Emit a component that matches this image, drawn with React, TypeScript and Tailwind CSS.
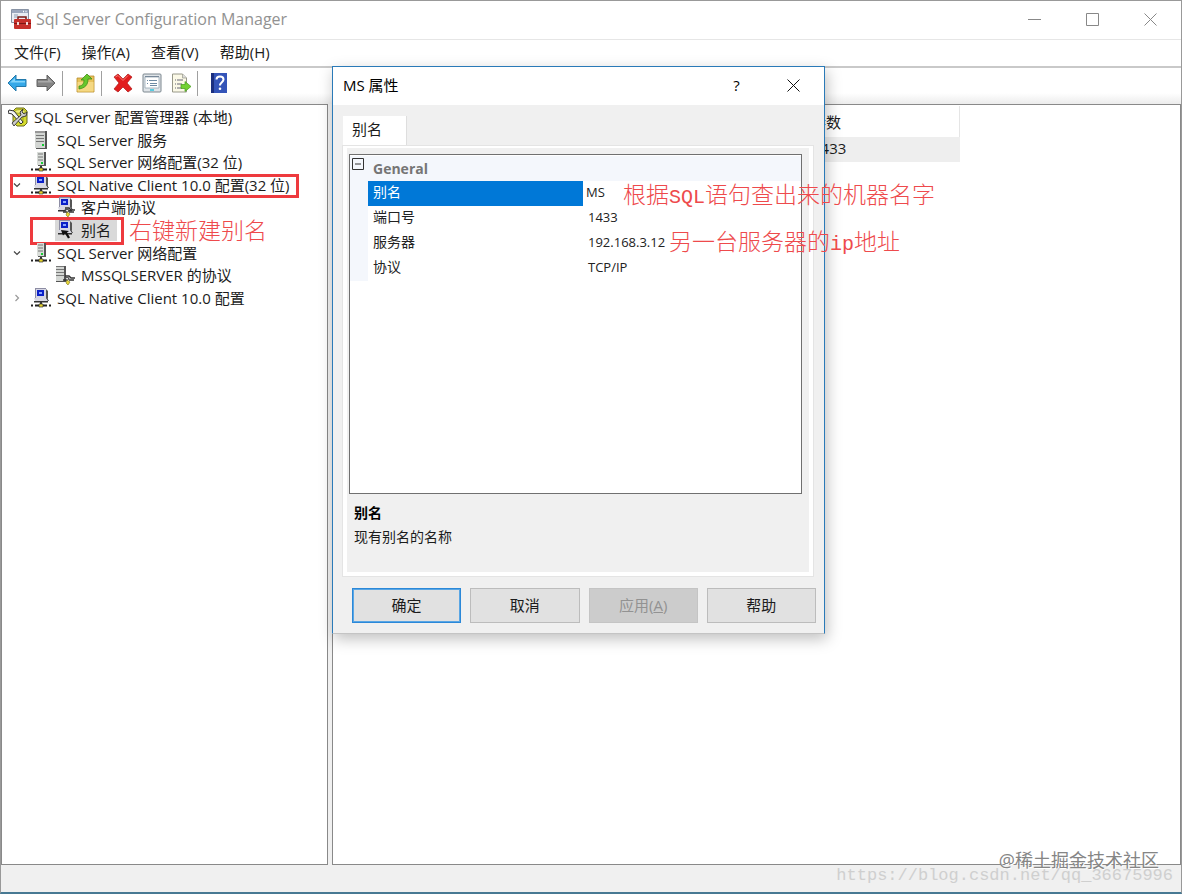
import type { ReactNode } from "react";

const uiFont = "font-['Open_Sans','Noto_Sans_CJK_SC',sans-serif]";

const menus = ["文件(F)", "操作(A)", "查看(V)", "帮助(H)"];

type IconName = "tools" | "server" | "network" | "client" | "protocols" | "alias" | "serverProtocols";

type TreeItem = {
    label: string;
    icon: IconName;
    level: number;
    state?: "open" | "closed";
    selected?: boolean;
    note?: string;
};

const tree: TreeItem[] = [
    { label: "SQL Server 配置管理器 (本地)", icon: "tools", level: 0 },
    { label: "SQL Server 服务", icon: "server", level: 1 },
    { label: "SQL Server 网络配置(32 位)", icon: "network", level: 1 },
    { label: "SQL Native Client 10.0 配置(32 位)", icon: "client", level: 1, state: "open" },
    { label: "客户端协议", icon: "protocols", level: 2 },
    { label: "别名", icon: "alias", level: 2, selected: true, note: "右键新建别名" },
    { label: "SQL Server 网络配置", icon: "network", level: 1, state: "open" },
    { label: "MSSQLSERVER 的协议", icon: "serverProtocols", level: 2 },
    { label: "SQL Native Client 10.0 配置", icon: "client", level: 1, state: "closed" },
];

const properties = [
    { name: "别名", value: "MS" },
    { name: "端口号", value: "1433" },
    { name: "服务器", value: "192.168.3.12" },
    { name: "协议", value: "TCP/IP" },
];

function Computer() {
    return (
        <>
            <path d="M5 1h10l2 2v8H5z" fill="#555" />
            <path d="M4 0h11v10H4z" fill="#d6d6e4" />
            <path d="M4 0h11v1H4zM4 0h1v10H4z" fill="#8d8da4" />
            <path d="M6 2h7v6H6z" fill="#0b20c8" />
            <path d="M8 4h3v2H8z" fill="#8aa5ff" />
            <path d="M3 10h13l2 3H4z" fill="#d8d8e2" />
            <path d="M3 13h14v1.500H3zM15 10l2 3h1l-2-3z" fill="#333" />
        </>
    );
}

function ServerBox() {
    return (
        <>
            <path d="M7 0h8v14H7z" fill="#555" />
            <path d="M6 0h7v13H6z" fill="#d9ddd9" />
            <path d="M7 2h5M7 5h5M7 8h5" stroke="#777" />
            <path d="M10 10h2v2h-2z" fill="#19cf35" />
        </>
    );
}

function Wire() {
    return (
        <>
            <path d="M9 14h2v3H9z" fill="#333" />
            <path d="M4 17.500h12M0 17.500h2M18 17.500h2" stroke="#222" strokeWidth="2" />
            <path d="M8 16h4v3H8z" fill="#e6d52d" stroke="#333" strokeWidth=".7" />
        </>
    );
}

function Plug() {
    return (
        <>
            <path d="M10 11h4l2 2h4M8 15h4l2-2M14 15h5" stroke="#333" strokeWidth="1.500" fill="none" />
            <path d="M10 12l4 1-2 3z" fill="#fff" stroke="#444" />
            <path d="M12 15l3 2-2 3-2-2z" fill="#e8d735" stroke="#77701d" strokeWidth=".6" />
        </>
    );
}

function TreeIcon({ name }: { name: IconName }) {
    return (
        <svg viewBox="0 0 20 20" className="size-5 shrink-0" aria-hidden="true">
            {name === "tools" && (
                <>
                    <path d="M8 1h8l3 3v12l-3 3H9l-4-4V4z" fill="#d6dc2c" stroke="#6b6d1e" />
                    <ellipse cx="12" cy="4.500" rx="5" ry="2" fill="#f1f277" stroke="#8c8d1f" strokeWidth=".7" />
                    <path d="M15 8v8M12 10v7" stroke="#9da321" />
                    <path d="M1 3l5 1 9 11-2 2L4 7 0 6z" fill="#f4f4f4" stroke="#333" />
                    <path d="M15 2l-3 3 1 3-9 8 2 3 8-9 4-1 1-4-3 2-2-2z" fill="#ccc" stroke="#333" strokeWidth=".9" />
                </>
            )}
            {name === "server" && (
                <>
                    <path d="M5 1h11v18H5z" fill="#555" />
                    <path d="M4 1h10v17H4z" fill="#d3d6d3" />
                    <path d="M4 1h10v2H4z" fill="#999" />
                    <path d="M5 5.500h8M5 8.500h8M5 11.500h8" stroke="#777" />
                    <path d="M11 14h2v2h-2z" fill="#12c931" />
                </>
            )}
            {name === "network" && (
                <>
                    <ServerBox />
                    <Wire />
                </>
            )}
            {name === "client" && (
                <>
                    <Computer />
                    <Wire />
                </>
            )}
            {name === "protocols" && (
                <>
                    <Computer />
                    <Plug />
                </>
            )}
            {name === "alias" && (
                <>
                    <Computer />
                    <path d="M6 10l8 1-2 1.500 3 5-2 1-3-5-2 2z" fill="#111" />
                </>
            )}
            {name === "serverProtocols" && (
                <>
                    <path d="M1 1h10v16H1z" fill="#555" />
                    <path d="M1 1h8v15H1z" fill="#d3d6d3" />
                    <path d="M1 4.500h8M1 7.500h8M1 10.500h8M1 1.500h8" stroke="#777" />
                    <Plug />
                </>
            )}
        </svg>
    );
}

function Tree() {
    return (
        <ul className="grid h-[203px] auto-rows-fr pl-1.5 text-[15px] leading-5" role="tree">
            {tree.map((item) => (
                <li key={item.label} role="treeitem" aria-selected={!!item.selected} className="relative flex items-center whitespace-nowrap">
                    {item.level > 0 && (
                        <span className={item.level === 1 ? "w-[23px] pl-1" : "w-[47px]"}>
                            {item.state && (
                                <button type="button" aria-label={item.label} className="block">
                                    <svg viewBox="0 0 10 10" className="size-2.5" fill="none">
                                        {item.state === "open" ? (
                                            <path d="M2 3.500l3 3 3-3" stroke="#444" strokeWidth="1.200" />
                                        ) : (
                                            <path d="M3.500 2l3 3-3 3" stroke="#999" strokeWidth="1.200" />
                                        )}
                                    </svg>
                                </button>
                            )}
                        </span>
                    )}
                    <span className={`flex h-full items-center gap-1.5 ${item.selected ? "bg-[#d9d9d9] pr-1.5" : ""}`}>
                        <TreeIcon name={item.icon} />
                        {item.label}
                    </span>
                    {item.level === 1 && item.icon === "client" && item.state === "open" && (
                        <span className="absolute top-0 -bottom-0.5 left-0.5 w-[289px] border-[3px] border-[#ee3a3e]" />
                    )}
                    {item.note && (
                        <>
                            <span className="absolute -top-0.5 -bottom-1 left-[22px] w-[94px] border-[3px] border-[#ee3a3e]" />
                            <Note className="-top-1.5 left-[121px]">{item.note}</Note>
                        </>
                    )}
                </li>
            ))}
        </ul>
    );
}

function Note({ className, children }: { className: string; children: ReactNode }) {
    return (
        <span className={`absolute z-20 font-['Noto_Sans_CJK_SC',sans-serif] text-[23px] font-light leading-8 whitespace-nowrap text-[#ee4a4c] ${className}`}>
            {children}
        </span>
    );
}

function Latin({ children }: { children: ReactNode }) {
    return <span className="font-['Liberation_Mono',monospace] text-[20px]">{children}</span>;
}

function ToolButton({ label, children }: { label: string; children: ReactNode }) {
    return (
        <button type="button" aria-label={label}>
            <svg viewBox="0 0 20 20" className="size-5">
                {children}
            </svg>
        </button>
    );
}

function Toolbar() {
    return (
        <div className="flex h-9 items-center bg-linear-to-b from-white from-70% to-[#ececec] pb-1.5 pl-1.5">
            <div className="flex gap-[9px] pr-1.5">
                <ToolButton label="后退">
                    <path d="M1 10l8-8v4.500h10v7H9V18z" fill="#35a8e8" stroke="#2379ab" />
                    <path d="M3 9.500L8 5v3h10v1.500z" fill="#85d5fa" />
                </ToolButton>
                <ToolButton label="前进">
                    <path d="M19 10l-8-8v4.500H1v7h10V18z" fill="#858585" stroke="#626262" />
                    <path d="M17 9.500L12 5v3H2v1.500z" fill="#a9a9a9" />
                </ToolButton>
            </div>
            <span className="h-[25px] w-px bg-[#a0a0a0]" />
            <div className="flex pr-1.5 pl-3">
                <ToolButton label="上一级">
                    <path d="M2 5h7l2-2h8v16H2z" fill="#e9c35b" stroke="#b58c2c" strokeWidth=".8" />
                    <path d="M2.500 9h16v9.500h-16z" fill="#f5d883" />
                    <path d="M4 13c3 0 5-2 5-6H6l6-6 5 5h-4c0 6-3 9-9 10z" fill="#67c72c" stroke="#3f8e18" strokeWidth=".8" />
                </ToolButton>
            </div>
            <span className="h-[25px] w-px bg-[#a0a0a0]" />
            <div className="flex gap-[9px] pr-1.5 pl-[11px]">
                <ToolButton label="删除">
                    <path d="M1 4l4-3 5 5 5-5 4 3-5 6 5 6-4 3-5-5-5 5-4-3 5-6z" fill="#e21d1d" stroke="#ad1717" strokeWidth=".7" />
                    <path d="M2.500 4L5 2.500l5 5 5-5" stroke="#f67a72" fill="none" />
                </ToolButton>
                <ToolButton label="属性">
                    <rect x="1" y="1" width="18" height="18" rx="1" fill="#dfe4e8" stroke="#7c878f" />
                    <path d="M3 4h14v11H3z" fill="#fff" stroke="#96a6b3" strokeWidth=".8" />
                    <path d="M3 3.500h14" stroke="#789" />
                    <path d="M7 7.500h8M8 10.500h7M8 12.500h7M5 7.500h1M5 10.500h1" stroke="#6d8ba3" />
                    <path d="M8 17h4" stroke="#2cc5df" strokeWidth="1.500" />
                </ToolButton>
                <ToolButton label="导出列表">
                    <path d="M1.500 1h10l4 4v14h-14z" fill="#fbf9e7" stroke="#989889" />
                    <path d="M11.500 1v4h4" fill="#ddd" stroke="#989889" strokeWidth=".7" />
                    <path d="M4 7h1M4 11h1M4 15h1M6 7h6M6 11h5M6 15h5" stroke="#667" strokeWidth="1.200" />
                    <path d="M10 11.500h4V8.500l6 5-6 5v-3h-4z" fill="#72d132" stroke="#439b1a" strokeWidth=".7" />
                </ToolButton>
            </div>
            <span className="h-[25px] w-px bg-[#a0a0a0]" />
            <div className="flex pl-[11px]">
                <ToolButton label="帮助">
                    <path d="M2 0h16v20H2z" fill="#3454b8" />
                    <path d="M2 0h3v20H2z" fill="#1b2f80" />
                    <path d="M7.500 6.500c0-4 7-4 7 0 0 2.500-3.500 3-3.500 6" stroke="#fff" strokeWidth="2" fill="none" />
                    <circle cx="11" cy="15.800" r="1.300" fill="#fff" />
                </ToolButton>
            </div>
        </div>
    );
}

function TitleBar() {
    return (
        <header className="flex h-[39px] items-center border-b border-[#e6e6e6] bg-white pb-0.5 pl-2.5 text-[#929292]">
            <svg viewBox="0 0 20 20" className="size-5" aria-hidden="true">
                <path d="M.5.500h17v13H.5z" fill="#e9edf3" stroke="#8893a5" />
                <path d="M1 1h16v3H1z" fill="#9ba7bd" />
                <path d="M12 2.500h1M14.500 2.500h1" stroke="#fff" strokeWidth="1.500" />
                <path d="M3 6h4M3 8h3" stroke="#8fa0b4" />
                <path d="M7 11V8h8v3" fill="none" stroke="#771915" strokeWidth="1.500" />
                <rect x="3" y="10" width="17" height="10" rx="1" fill="#c62f2a" />
                <path d="M3 14.500h17" stroke="#7b1613" />
                <path d="M6 13h2v3H6zM15 13h2v3h-2z" fill="#f0dada" />
            </svg>
            <h1 className="flex-1 pl-[5px] text-base">Sql Server Configuration Manager</h1>
            <div className="flex pr-0.5">
                <button type="button" aria-label="最小化" className="flex w-[58px] justify-center">
                    <svg viewBox="0 0 13 13" className="size-[13px]"><path d="M0 6.500h13" stroke="#888" /></svg>
                </button>
                <button type="button" aria-label="最大化" className="flex w-[58px] justify-center">
                    <svg viewBox="0 0 13 13" className="size-[13px]"><path d="M.5.500h12v12H.5z" stroke="#888" fill="none" /></svg>
                </button>
                <button type="button" aria-label="关闭" className="flex w-[58px] justify-center">
                    <svg viewBox="0 0 13 13" className="size-[13px]"><path d="M.5.500l12 12M12.500.500l-12 12" stroke="#888" /></svg>
                </button>
            </div>
        </header>
    );
}

function PropertyGrid() {
    return (
        <div className="relative h-[340px] border border-[#707070] bg-white pt-px">
            <table className="w-full table-fixed border-collapse text-left text-sm leading-5 text-[#222]">
                <colgroup>
                    <col className="w-[18px]" />
                    <col className="w-[215px]" />
                    <col />
                </colgroup>
                <tbody>
                    <tr className="h-[25px] bg-[#f4f7fc]">
                        <td className="p-0 align-top">
                            <button type="button" aria-label="General" className="block pt-0.5 pl-0.5">
                                <svg viewBox="0 0 12 12" className="size-3"><path d="M.5.500h11v11H.5zM3 6h6" fill="none" stroke="#333" /></svg>
                            </button>
                        </td>
                        <th colSpan={2} className="p-0 pl-[5px] font-bold text-[#757575]">General</th>
                    </tr>
                    {properties.map((row, i) => (
                        <tr key={row.name} className="h-[25px]">
                            <td className="bg-[#f4f7fc] p-0" />
                            <th className={`p-0 pb-[3px] pl-[5px] font-normal ${i === 0 ? "bg-[#0078d7] text-white" : ""}`}>{row.name}</th>
                            <td className={`p-0 pb-[3px] text-[13px] ${i === 0 ? "pl-[3px]" : "pl-[5px]"}`}>{row.value}</td>
                        </tr>
                    ))}
                </tbody>
            </table>
            <Note className="top-[22px] left-[273px]">根据<Latin>SQL</Latin>语句查出来的机器名字</Note>
            <Note className="top-[69px] left-[319px]">另一台服务器的<Latin>ip</Latin>地址</Note>
        </div>
    );
}

function PropertiesDialog() {
    const button = "h-[35px] flex-1 border pb-px text-[15px]";

    return (
        <section role="dialog" aria-label="MS 属性" className="absolute top-[65px] left-[331px] z-10 w-[493px] border border-[#2a7ab8] border-b-[#c4c4c4] bg-[#f0f0f0] shadow-[2px_5px_14px_rgba(0,0,0,0.25)]">
            <div className="flex h-[38px] items-center bg-white pb-0.5 pl-2.5">
                <h2 className="flex-1 text-[15px] text-black">MS 属性</h2>
                <button type="button" aria-label="帮助" className="w-[57px] text-[15px] text-black">?</button>
                <button type="button" aria-label="关闭" className="flex w-[59px] justify-center pr-[3px]">
                    <svg viewBox="0 0 13 13" className="size-[13px]"><path d="M.5.500l12 12M12.500.500l-12 12" stroke="#111" /></svg>
                </button>
            </div>
            <div className="pt-[11px] pr-[11px] pl-2.5">
                <div role="tablist" className="flex">
                    <button type="button" role="tab" aria-selected="true" className="h-[30px] w-16 border-r border-[#dedede] bg-white pb-1 pl-[9px] text-left text-[15px]">别名</button>
                </div>
                <div role="tabpanel" className="border-4 border-t-2 border-white bg-[#f0f0f0] outline outline-[#e4e4e4]">
                    <div className="pt-1.5 pr-[7px] pl-0.5">
                        <PropertyGrid />
                    </div>
                    <div className="h-[78px] pt-[7px] pl-[7px] text-sm leading-6">
                        <h3 className="font-bold text-black">别名</h3>
                        <p>现有别名的名称</p>
                    </div>
                </div>
            </div>
            <div className="flex gap-[9px] pt-3 pr-2 pb-2.5 pl-[19px]">
                <button type="button" className={`${button} border-[#2b88d8] bg-[#e1e1e1] shadow-[inset_0_0_0_1px_#5aa6e4]`}>确定</button>
                <button type="button" className={`${button} border-[#bcbcbc] bg-[#e1e1e1]`}>取消</button>
                <button type="button" disabled className={`${button} border-[#c4c4c4] bg-[#cccccc] text-[#929292]`}>应用(<u>A</u>)</button>
                <button type="button" className={`${button} border-[#bcbcbc] bg-[#e1e1e1]`}>帮助</button>
            </div>
        </section>
    );
}

export default function App() {
    return (
        <main className={`relative flex h-screen flex-col overflow-hidden border border-b-2 border-[#999] border-b-[#477993] bg-[#f0f0f0] text-[#1c1c1c] ${uiFont}`}>
            <TitleBar />
            <nav className="flex h-7 items-center gap-[21px] border-b-2 border-[#c9c9c9] bg-white pb-px pl-[13px] text-[15px]">
                {menus.map((menu) => (
                    <button key={menu} type="button">{menu}</button>
                ))}
            </nav>
            <Toolbar />
            <div className="flex min-h-0 flex-1 gap-1">
                <aside className="w-[327px] shrink-0 border border-[#898989] bg-white pt-px">
                    <Tree />
                </aside>
                <div className="min-w-0 flex-1 border border-[#898989] bg-white pt-px">
                    <table className="w-[627px] text-left text-[15px] leading-5">
                        <thead>
                            <tr className="h-[31px]">
                                <th className="border-r border-[#e5e5e5] p-0 pl-[478px] font-normal">参数</th>
                            </tr>
                        </thead>
                        <tbody>
                            <tr className="h-[25px] bg-[#eeeeee]">
                                <td className="p-0 pb-[3px] pl-[479px]">1433</td>
                            </tr>
                        </tbody>
                    </table>
                </div>
            </div>
            <footer className="h-[27px] shrink-0" />
            <PropertiesDialog />
            <p className="absolute right-[22px] bottom-5 text-lg leading-6 text-[#858585] [text-shadow:1px_1px_0_#fff]">@稀土掘金技术社区</p>
            <p className="absolute right-2 bottom-1.5 font-['Liberation_Mono',monospace] text-[17px] leading-5 text-[#cfcfcf]">https://blog.csdn.net/qq_36675996</p>
        </main>
    );
}
